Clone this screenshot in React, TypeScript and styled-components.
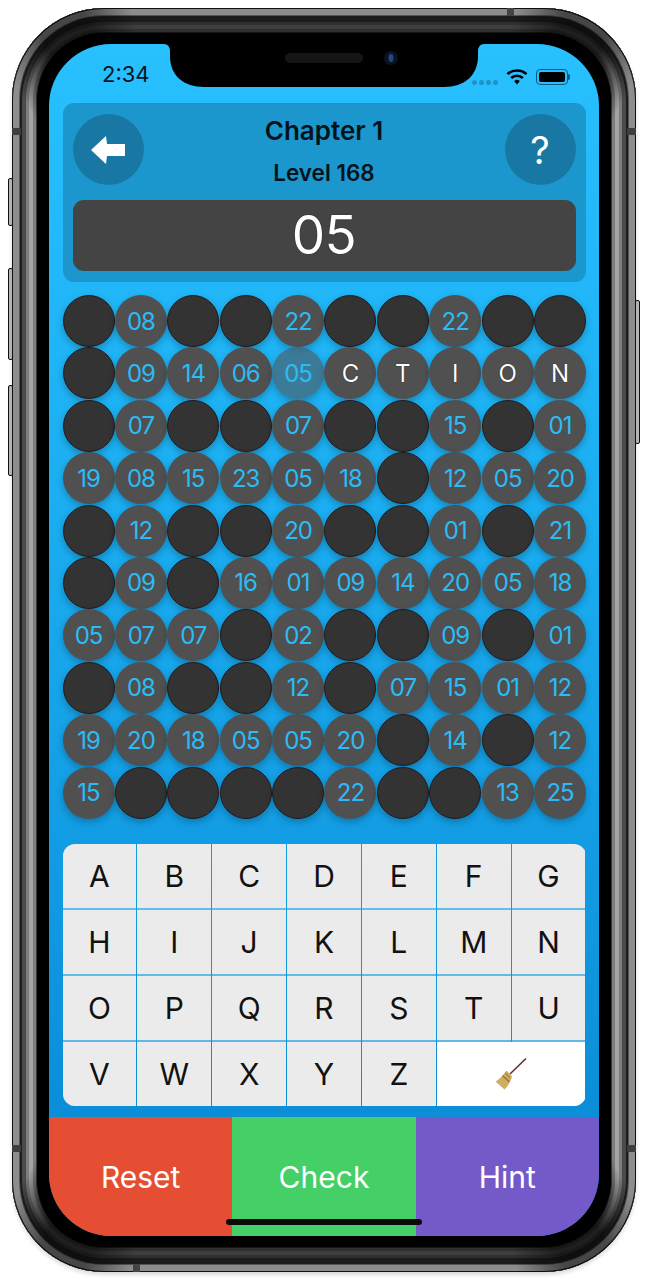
import React from "react";
import styled, { createGlobalStyle } from "styled-components";

const BOARD = [
    ["", "08", "", "", "22", "", "", "22", "", ""],
    ["", "09", "14", "06", "05", "C", "T", "I", "O", "N"],
    ["", "07", "", "", "07", "", "", "15", "", "01"],
    ["19", "08", "15", "23", "05", "18", "", "12", "05", "20"],
    ["", "12", "", "", "20", "", "", "01", "", "21"],
    ["", "09", "", "16", "01", "09", "14", "20", "05", "18"],
    ["05", "07", "07", "", "02", "", "", "09", "", "01"],
    ["", "08", "", "", "12", "", "07", "15", "01", "12"],
    ["19", "20", "18", "05", "05", "20", "", "14", "", "12"],
    ["15", "", "", "", "", "22", "", "", "13", "25"],
];

const LETTERS = "ABCDEFGHIJKLMNOPQRSTUVWXYZ".split("");

const App = () => {
    return (
        <>
            <GlobalStyle />
            <Frame>
                <SideButton $side="left" $top={170} $height={48} />
                <SideButton $side="left" $top={260} $height={92} />
                <SideButton $side="left" $top={377} $height={91} />
                <SideButton $side="right" $top={292} $height={144} />
                <BandH $left={495} $edge="top" />
                <BandH $left={121} $edge="bottom" />
                <BandV $top={120} $edge="left" />
                <BandV $top={120} $edge="right" />
                <BandV $top={1137} $edge="left" />
                <BandV $top={1137} $edge="right" />
                <Screen>
                    <Notch viewBox="0 0 320 44" width="320" height="44">
                        <path
                            d="M0 0 Q6 0 6 8 V12 C6 32 20 43 40 43 H280 C300 43 314 32 314 12 V8 Q314 0 320 0 Z"
                            fill="#000"
                        />
                        <rect x="121" y="9" width="78" height="10" rx="5" fill="#151515" />
                        <circle cx="227" cy="14" r="7" fill="#0b1220" />
                        <ellipse cx="227" cy="14" rx="2.5" ry="4" fill="#24497e" />
                    </Notch>
                    <StatusBar>
                        <Clock>2:34</Clock>
                        <StatusIcons>
                            <Dots>
                                <Dot />
                                <Dot />
                                <Dot />
                                <Dot />
                            </Dots>
                            <svg width="22" height="17" viewBox="0 0 22 17" fill="none" stroke="#000" strokeWidth="2.6">
                                <path d="M1.5 6.2 C6.5 1.2 15.5 1.2 20.5 6.2" />
                                <path d="M5.2 10 C8.2 7 13.8 7 16.8 10" />
                                <path d="M9 13.2 C10.2 12.2 11.8 12.2 13 13.2 L11 15.6 Z" fill="#000" strokeWidth="1.2" />
                            </svg>
                            <Battery>
                                <BatteryFill />
                            </Battery>
                        </StatusIcons>
                    </StatusBar>

                    <Panel>
                        <PanelTop>
                            <RoundButton>
                                <svg width="34" height="28" viewBox="0 0 34 28">
                                    <path d="M0 14 L15 0 L16 8 H34 V20 H16 L15 28 Z" fill="#fff" />
                                </svg>
                            </RoundButton>
                            <Titles>
                                <Chapter>Chapter 1</Chapter>
                                <Level>Level 168</Level>
                            </Titles>
                            <RoundButton>?</RoundButton>
                        </PanelTop>
                        <Display>05</Display>
                    </Panel>

                    <Board>
                        {BOARD.flat().map((value, index) => {
                            const isLetter = /[A-Z]/.test(value);
                            const isActive = index === 14;
                            return (
                                <Cell
                                    key={index}
                                    $kind={value === "" ? "blocked" : isActive ? "active" : "open"}
                                    $letter={isLetter}
                                >
                                    {value}
                                </Cell>
                            );
                        })}
                    </Board>

                    <Keyboard>
                        {LETTERS.map((letter) => (
                            <Key key={letter}>{letter}</Key>
                        ))}
                        <ClearKey>
                            <svg width="32" height="32" viewBox="0 0 32 32">
                                <path d="M31 0.5 L15 16" stroke="#5c2b2b" strokeWidth="1.5" />
                                <path d="M11.5 12.5 L17 18 Q15 26 9.5 31.5 L0.5 23.5 Q6.5 20 11.5 12.5 Z" fill="#cfae62" />
                                <path d="M7.5 17.5 L14.5 24" stroke="#9c7a35" strokeWidth="1.6" />
                                <path d="M10 14.8 L16 20.6" stroke="#a98838" strokeWidth="1.2" />
                            </svg>
                        </ClearKey>
                    </Keyboard>

                    <Actions>
                        <Action $color="#e54e33">Reset</Action>
                        <Action $color="#45cf67">Check</Action>
                        <Action $color="#735ac8">Hint</Action>
                    </Actions>
                    <HomeIndicator />
                </Screen>
            </Frame>
        </>
    );
};

export default App;

const GlobalStyle = createGlobalStyle`
    html, body {
        margin: 0;
        padding: 0;
        background: #fff;
    }
    body {
        font-family: "Inter", "Liberation Sans", sans-serif;
    }
`;

const Frame = styled.div`
    position: relative;
    box-sizing: border-box;
    width: 624px;
    height: 1264px;
    margin: 8px 12px;
    padding: 36px 37px;
    border-radius: 92px;
    background: #000;
    box-shadow:
        inset 0 0 0 1px #111,
        inset 0 0 0 7px #8d8d8d,
        inset 0 0 0 8px #555,
        inset 0 0 0 10px #1c1c1c,
        inset 0 0 0 14px #4a4a4a,
        inset 0 0 0 17px #7d7d7d,
        inset 0 0 0 21px #a3a3a3,
        inset 0 0 0 24px #7c7c7c,
        inset 0 0 0 25px #3c3c3c,
        0 3px 4px rgba(0, 0, 0, 0.15);

    /* the wide inner band goes dark along the top, bottom and corners */
    &::before {
        content: "";
        position: absolute;
        inset: 10px;
        border-radius: 82px;
        background: conic-gradient(
            rgba(0, 0, 0, 0.62) 0deg 25deg,
            transparent 29deg 151deg,
            rgba(0, 0, 0, 0.62) 155deg 205deg,
            transparent 209deg 331deg,
            rgba(0, 0, 0, 0.62) 335deg 360deg
        );
    }

    /* the outer band darkens only at the four corners */
    &::after {
        content: "";
        position: absolute;
        inset: 0;
        border-radius: 92px;
        pointer-events: none;
        background: conic-gradient(
            transparent 0deg 17deg,
            rgba(0, 0, 0, 0.5) 21deg 25deg,
            transparent 29deg 151deg,
            rgba(0, 0, 0, 0.5) 155deg 159deg,
            transparent 163deg 197deg,
            rgba(0, 0, 0, 0.5) 201deg 205deg,
            transparent 209deg 331deg,
            rgba(0, 0, 0, 0.5) 335deg 339deg,
            transparent 343deg 360deg
        );
    }
`;

const SideButton = styled.div<{ $side: "left" | "right"; $top: number; $height: number }>`
    position: absolute;
    top: ${(p) => p.$top}px;
    ${(p) => (p.$side === "left" ? "left: -4px;" : "right: -4px;")}
    box-sizing: border-box;
    width: 5px;
    height: ${(p) => p.$height}px;
    border: 1px solid #111;
    border-radius: 2px;
    background: #b4b4b4;
`;

const BandH = styled.div<{ $left: number; $edge: "top" | "bottom" }>`
    position: absolute;
    left: ${(p) => p.$left}px;
    ${(p) => p.$edge}: 0;
    width: 7px;
    height: 8px;
    background: #444;
`;

const BandV = styled.div<{ $top: number; $edge: "left" | "right" }>`
    position: absolute;
    top: ${(p) => p.$top}px;
    ${(p) => p.$edge}: 0;
    width: 9px;
    height: 7px;
    background: #3e3e3e;
`;

const Screen = styled.div`
    position: relative;
    z-index: 1;
    display: flex;
    flex-direction: column;
    width: 550px;
    height: 1192px;
    overflow: hidden;
    border-radius: 62px;
    background: linear-gradient(180deg, #28c0ff 0%, #1cb0f3 35%, #0a8bd6 94%);
`;

const Notch = styled.svg`
    position: absolute;
    top: 0;
    left: 115px;
`;

const StatusBar = styled.div`
    display: flex;
    align-items: flex-end;
    justify-content: space-between;
    box-sizing: border-box;
    height: 59px;
    padding: 0 31px 17px 53px;
`;

const Clock = styled.span`
    font-size: 22px;
    line-height: 24px;
    color: #06141c;
`;

const StatusIcons = styled.div`
    display: flex;
    align-items: center;
    gap: 8px;
    margin-bottom: 1px;
`;

const Dots = styled.div`
    display: flex;
    gap: 2px;
    margin-top: 12px;
`;

const Dot = styled.span`
    width: 5px;
    height: 5px;
    border-radius: 50%;
    background: #1d94c6;
`;

const Battery = styled.div`
    position: relative;
    box-sizing: border-box;
    width: 32px;
    height: 16px;
    padding: 2px;
    border: 1px solid #0b5d85;
    border-radius: 4px;

    &::after {
        content: "";
        position: absolute;
        top: 4px;
        right: -3px;
        width: 2px;
        height: 6px;
        border-radius: 0 2px 2px 0;
        background: #0b5d85;
    }
`;

const BatteryFill = styled.div`
    height: 100%;
    border-radius: 2px;
    background: #000;
`;

const Panel = styled.div`
    display: flex;
    flex-direction: column;
    gap: 15px;
    box-sizing: border-box;
    height: 179px;
    margin: 0 13.5px 13px;
    padding: 11px 10px;
    border-radius: 11px;
    background: #1b97cd;
`;

const PanelTop = styled.div`
    display: flex;
    justify-content: space-between;
    height: 71px;
`;

const RoundButton = styled.div`
    display: flex;
    align-items: center;
    justify-content: center;
    width: 71px;
    height: 71px;
    border-radius: 50%;
    background: #1878a3;
    color: #fff;
    font-size: 38px;
`;

const Titles = styled.div`
    display: flex;
    flex-direction: column;
    align-items: center;
`;

const Chapter = styled.div`
    font-size: 26px;
    line-height: 34px;
    font-weight: 600;
    color: #04121a;
`;

const Level = styled.div`
    margin-top: 11px;
    font-size: 22.5px;
    line-height: 28px;
    font-weight: 600;
    color: #04121a;
`;

const Display = styled.div`
    height: 71px;
    border-radius: 11px;
    background: #444;
    color: #fff;
    font-size: 53px;
    line-height: 71px;
    text-align: center;
    letter-spacing: -0.5px;
    text-shadow: 0 0 1px #000;
`;

const Board = styled.div`
    display: grid;
    grid-template-columns: repeat(10, 52.4px);
    grid-auto-rows: 52.4px;
    margin: 0 13.5px 25px;
`;

const Cell = styled.div<{ $kind: "blocked" | "open" | "active"; $letter: boolean }>`
    display: flex;
    align-items: center;
    justify-content: center;
    box-sizing: border-box;
    width: 52px;
    height: 52px;
    border-radius: 50%;
    border: ${(p) => (p.$kind === "blocked" ? "1px solid #241a1a" : "none")};
    background: ${(p) =>
        p.$kind === "blocked" ? "#333" : p.$kind === "active" ? "rgba(80, 85, 90, 0.6)" : "#505050"};
    box-shadow: 0 3px 7px rgba(0, 0, 0, 0.25);
    color: ${(p) => (p.$letter ? "#fff" : "#2bbcf6")};
    font-size: 24px;
    font-weight: 400;
    letter-spacing: ${(p) => (p.$letter ? "0" : "-1px")};
    text-shadow: ${(p) => (p.$letter ? "0 0 1px #000" : "none")};
`;

const Keyboard = styled.div`
    display: grid;
    grid-template-columns: repeat(7, 1fr);
    grid-auto-rows: 1fr;
    gap: 2px 1px;
    height: 262px;
    margin: 0 13.5px 11px;
    overflow: hidden;
    border-radius: 12px;
`;

const Key = styled.div`
    display: flex;
    align-items: center;
    justify-content: center;
    background: #ebebeb;
    box-shadow: 0 2px 0 rgba(255, 255, 255, 0.35);
    color: #111;
    font-size: 30px;
`;

const ClearKey = styled(Key)`
    grid-column: span 2;
    background: #fff;
`;

const Actions = styled.div`
    display: grid;
    grid-template-columns: repeat(3, 1fr);
    height: 119px;
`;

const Action = styled.div<{ $color: string }>`
    display: flex;
    align-items: center;
    justify-content: center;
    box-sizing: border-box;
    padding-top: 2px;
    background: ${(p) => p.$color};
    color: #fff;
    font-size: 30px;
`;

const HomeIndicator = styled.div`
    position: absolute;
    left: 177px;
    bottom: 11px;
    width: 196px;
    height: 6px;
    border-radius: 3px;
    background: #0a0a0a;
`;
